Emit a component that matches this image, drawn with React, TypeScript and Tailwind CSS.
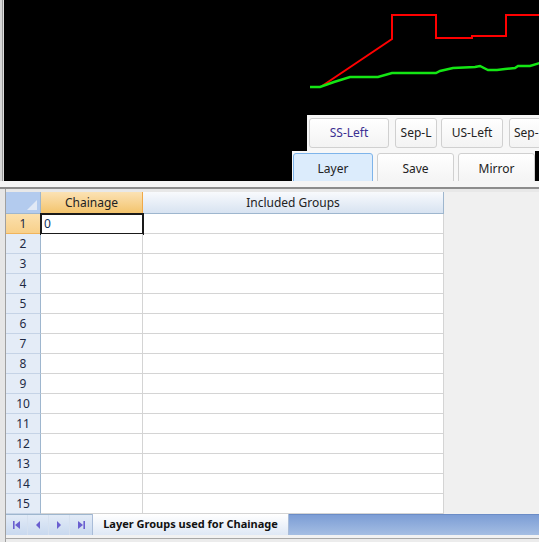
import React from "react";

const rows = Array.from({ length: 15 }, (_, i) => i + 1);

function Btn({ label, w, active, tone }: { label: string; w: string; active?: boolean; tone?: string }) {
  return (
    <div
      className={`${w} h-full shrink-0 rounded-[3px] border flex items-center justify-center text-[12px] ${
        active ? "bg-[#dcecfc] border-[#7eb4ea]" : "bg-gradient-to-b from-white to-[#f3f3f3] border-[#d0d0d0]"
      } ${tone ?? "text-[#222]"}`}
    >
      {label}
    </div>
  );
}

function NavIcon({ kind }: { kind: "first" | "prev" | "next" | "last" }) {
  return (
    <svg width="10" height="10" viewBox="0 0 10 10" className="text-[#6a5fd0]">
      {kind === "first" && (
        <>
          <rect x="1" y="1" width="1.6" height="8" fill="currentColor" />
          <path d="M8 1 L3 5 L8 9 Z" fill="currentColor" />
        </>
      )}
      {kind === "prev" && <path d="M7 1 L3 5 L7 9 Z" fill="currentColor" />}
      {kind === "next" && <path d="M3 1 L7 5 L3 9 Z" fill="currentColor" />}
      {kind === "last" && (
        <>
          <path d="M2 1 L7 5 L2 9 Z" fill="currentColor" />
          <rect x="7.4" y="1" width="1.6" height="8" fill="currentColor" />
        </>
      )}
    </svg>
  );
}

export default function App() {
  return (
    <div className="w-[539px] h-[542px] bg-[#f0f0f0] overflow-hidden flex flex-col font-['Noto_Sans',sans-serif]">
      {/* viewer */}
      <div className="h-[181px] flex shrink-0">
        <div className="w-[2px] bg-[#d6d6d6]" />
        <div className="w-[1px] bg-[#9a9a9a]" />
        <div className="w-[1px] bg-[#dedede]" />
        <div className="flex-1 bg-black relative flex flex-col justify-end items-end overflow-hidden">
          <svg className="absolute inset-0" width="535" height="181" viewBox="4 0 535 181">
            <polyline
              points="322,86 392,39 392,15 436,15 436,38 472,38 472,36 506,36 506,15 540,15"
              fill="none"
              stroke="#ff0000"
              strokeWidth="2"
            />
            <polyline
              points="310,87 320,87 334,82 350,77 378,77 392,73 436,73 440,71 453,68 475,67 480,66 488,70 497,70 505,69 515,68 518,66 530,66 540,63"
              fill="none"
              stroke="#14e614"
              strokeWidth="2.4"
            />
          </svg>
          <div className="relative w-[232px] h-[36px] bg-[#f7f7f7] pt-[3px] pb-[3px] pl-[2px] flex overflow-hidden">
            <Btn label="SS-Left" w="w-[80px]" tone="text-[#3b2f92]" />
            <div className="w-[6px] shrink-0" />
            <Btn label="Sep-L" w="w-[42px]" />
            <div className="w-[4px] shrink-0" />
            <Btn label="US-Left" w="w-[62px]" />
            <div className="w-[6px] shrink-0" />
            <Btn label="Sep-R" w="w-[42px]" />
          </div>
          <div className="relative mr-[4px] w-[243px] h-[30px] bg-[#f7f7f7] pt-[2px] pl-[1px] flex overflow-hidden">
            <div className="h-[32px] flex gap-[4px]">
              <Btn label="Layer" w="w-[80px]" active />
              <Btn label="Save" w="w-[77px]" />
              <Btn label="Mirror" w="w-[77px]" />
            </div>
          </div>
        </div>
      </div>
      <div className="h-[6px] bg-[#f5f5f5] shrink-0" />
      <div className="h-[2px] bg-[#8c8c8c] shrink-0" />

      {/* grid */}
      <div className="flex-1 flex min-h-0">
        <div className="w-[5px] bg-[#e6e6e6]" />
        <div className="w-[1px] bg-[#a0a0a0]" />
        <div className="flex-1 flex flex-col">
          <div className="h-[3px] bg-[#e8e8e8]" />
          {/* header */}
          <div className="h-[22px] flex shrink-0 text-[12px] text-[#222]">
            <div className="w-[35px] relative bg-[#b3cbee] border-r border-b border-[#9eb6ce]">
              <svg className="absolute right-[3px] bottom-[3px]" width="10" height="10" viewBox="0 0 10 10">
                <path d="M10 0 L10 10 L0 10 Z" fill="#e1e9f5" />
              </svg>
            </div>
            <div className="w-[102px] flex items-center justify-center bg-gradient-to-b from-[#fbe2b4] to-[#f3c46c] border-r border-b border-[#f0a948]">
              Chainage
            </div>
            <div className="w-[301px] flex items-center justify-center bg-gradient-to-b from-[#f8fafd] to-[#d8e3f1] border-r border-b border-[#9eb6ce]">
              Included Groups
            </div>
          </div>
          {rows.map((r) => (
            <div key={r} className="h-[20px] flex shrink-0 text-[12px]">
              <div
                className={`w-[35px] flex items-center justify-center border-r border-b text-[#1e2a44] ${
                  r === 1
                    ? "bg-gradient-to-b from-[#fbe0ad] to-[#f8d08a] border-[#f0b45c]"
                    : "bg-[#e4ecf7] border-r-[#9eb6ce] border-b-[#c5d3e6]"
                }`}
              >
                {r}
              </div>
              <div className="w-[102px] relative bg-white border-r border-b border-[#d4d4d4]">
                {r === 1 && (
                  <div className="absolute -left-[1px] -top-[1px] w-[104px] h-[22px] border-2 border-[#1a1a1a] flex items-center pl-[2px] text-[#10305a]">
                    0
                  </div>
                )}
              </div>
              <div className="w-[301px] bg-white border-r border-b border-[#d4d4d4]" />
            </div>
          ))}
          {/* sheet tabs */}
          <div className="h-[21px] flex shrink-0">
            <div className="w-[86px] flex bg-gradient-to-b from-[#e2ebf7] to-[#c9d9ef] border-t border-[#9eb6ce]">
              <div className="w-[22px] flex items-center justify-center border-r border-[#d6e1f0]">
                <NavIcon kind="first" />
              </div>
              <div className="w-[21px] flex items-center justify-center border-r border-[#d6e1f0]">
                <NavIcon kind="prev" />
              </div>
              <div className="w-[21px] flex items-center justify-center border-r border-[#d6e1f0]">
                <NavIcon kind="next" />
              </div>
              <div className="flex-1 flex items-center justify-center">
                <NavIcon kind="last" />
              </div>
            </div>
            <div className="w-[197px] flex items-center justify-center bg-gradient-to-b from-white to-[#dfe8f5] border-l border-r border-[#a9bcd8] text-[11px] font-bold text-[#111]">
              Layer Groups used for Chainage
            </div>
            <div className="flex-1 bg-gradient-to-b from-[#7c9dd5] to-[#a5bee3] border-t border-[#6b8cc6]" />
          </div>
          <div className="h-[3px] bg-[#f2f2f2]" />
          <div className="h-[1px] bg-[#a8a8a8]" />
          <div className="flex-1 bg-[#ececec]" />
        </div>
      </div>
    </div>
  );
}
